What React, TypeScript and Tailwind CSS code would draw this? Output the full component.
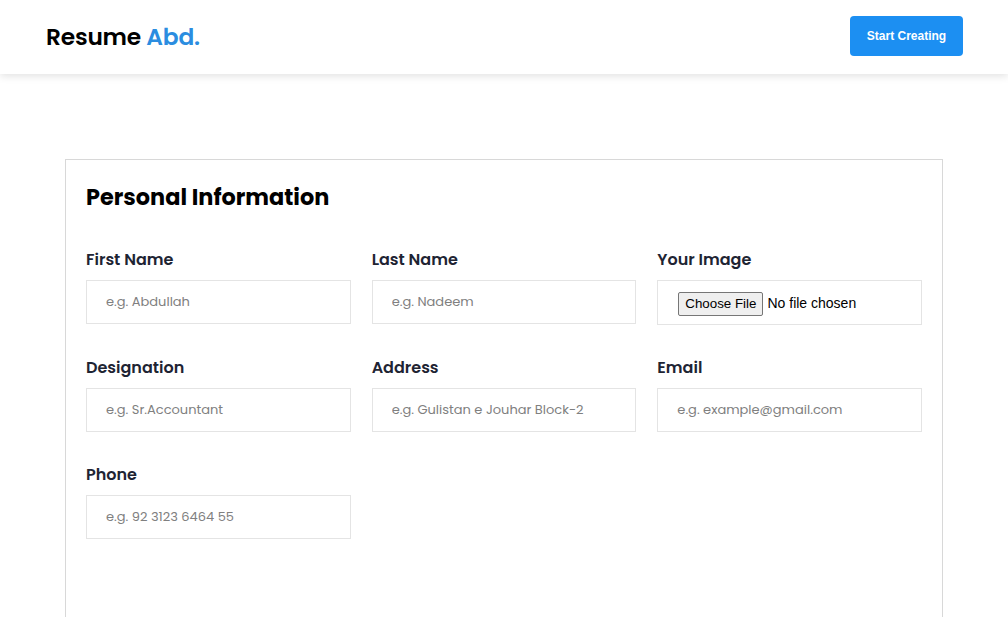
import React from "react";

interface FieldProps {
  label: string;
  placeholder?: string;
  type?: string;
}

const Field: React.FC<FieldProps> = ({ label, placeholder, type = "text" }) => {
  // file input keeps the browser look, text inputs get the flat box
  if (type === "file") {
    return (
      <div className="flex flex-col">
        <label className="text-[16px] leading-6 font-semibold text-[#1e2433] mb-[8px]">
          {label}
        </label>
        <input
          type="file"
          className="h-[45px] w-full border border-[#e4e4e4] pl-5 pt-[11px] text-[14px] text-black font-['Liberation_Sans',Arial,sans-serif] file:mr-1 file:border file:border-solid file:border-[#767676] file:bg-[#efefef] file:rounded-[2px] file:px-[6px] file:py-[1px] file:text-[13.33px] file:text-black file:font-['Liberation_Sans',Arial,sans-serif]"
        />
      </div>
    );
  }

  return (
    <div className="flex flex-col">
      <label className="text-[16px] leading-6 font-semibold text-[#1e2433] mb-[8px]">
        {label}
      </label>
      <input
        type={type}
        placeholder={placeholder}
        className="h-[44px] w-full border border-[#e4e4e4] px-[19px] text-[13px] text-gray-700 placeholder-[#808080] focus:outline-none"
      />
    </div>
  );
};

export default function App() {
  return (
    <div className="min-h-screen bg-white font-['Poppins','Open_Sans',sans-serif]">
      {/* --- Header --- */}
      <header className="h-[74px] flex items-center justify-between pl-[46px] pr-[45px] bg-white shadow-[0_2px_8px_rgba(0,0,0,0.12)]">
        <h1 className="text-[23.3px] font-semibold text-black tracking-[-0.2px]">
          Resume <span className="text-[#2b8de0]">Abd.</span>
        </h1>
        <button className="self-start mt-4 h-10 w-[113px] rounded-[4px] bg-[#1c8ff2] text-white text-[12px] font-bold font-['Liberation_Sans',Arial,sans-serif]">
          Start Creating
        </button>
      </header>

      {/* --- Form card --- */}
      <main className="pt-[85px] px-[65px]">
        <section className="border border-[#d8d8d8] border-b-0 px-[20px] pt-[21px] pb-[78px]">
          <h2 className="text-[22.4px] leading-8 font-bold text-black mb-[35px]">
            Personal Information
          </h2>
          <div className="grid grid-cols-3 gap-x-[21px] gap-y-[31px]">
            <Field label="First Name" placeholder="e.g. Abdullah" />
            <Field label="Last Name" placeholder="e.g. Nadeem" />
            <Field label="Your Image" type="file" />
            <Field label="Designation" placeholder="e.g. Sr.Accountant" />
            <Field label="Address" placeholder="e.g. Gulistan e Jouhar Block-2" />
            <Field label="Email" placeholder="e.g. example@gmail.com" />
            <Field label="Phone" placeholder="e.g. 92 3123 6464 55" />
          </div>
        </section>
      </main>
    </div>
  );
}
